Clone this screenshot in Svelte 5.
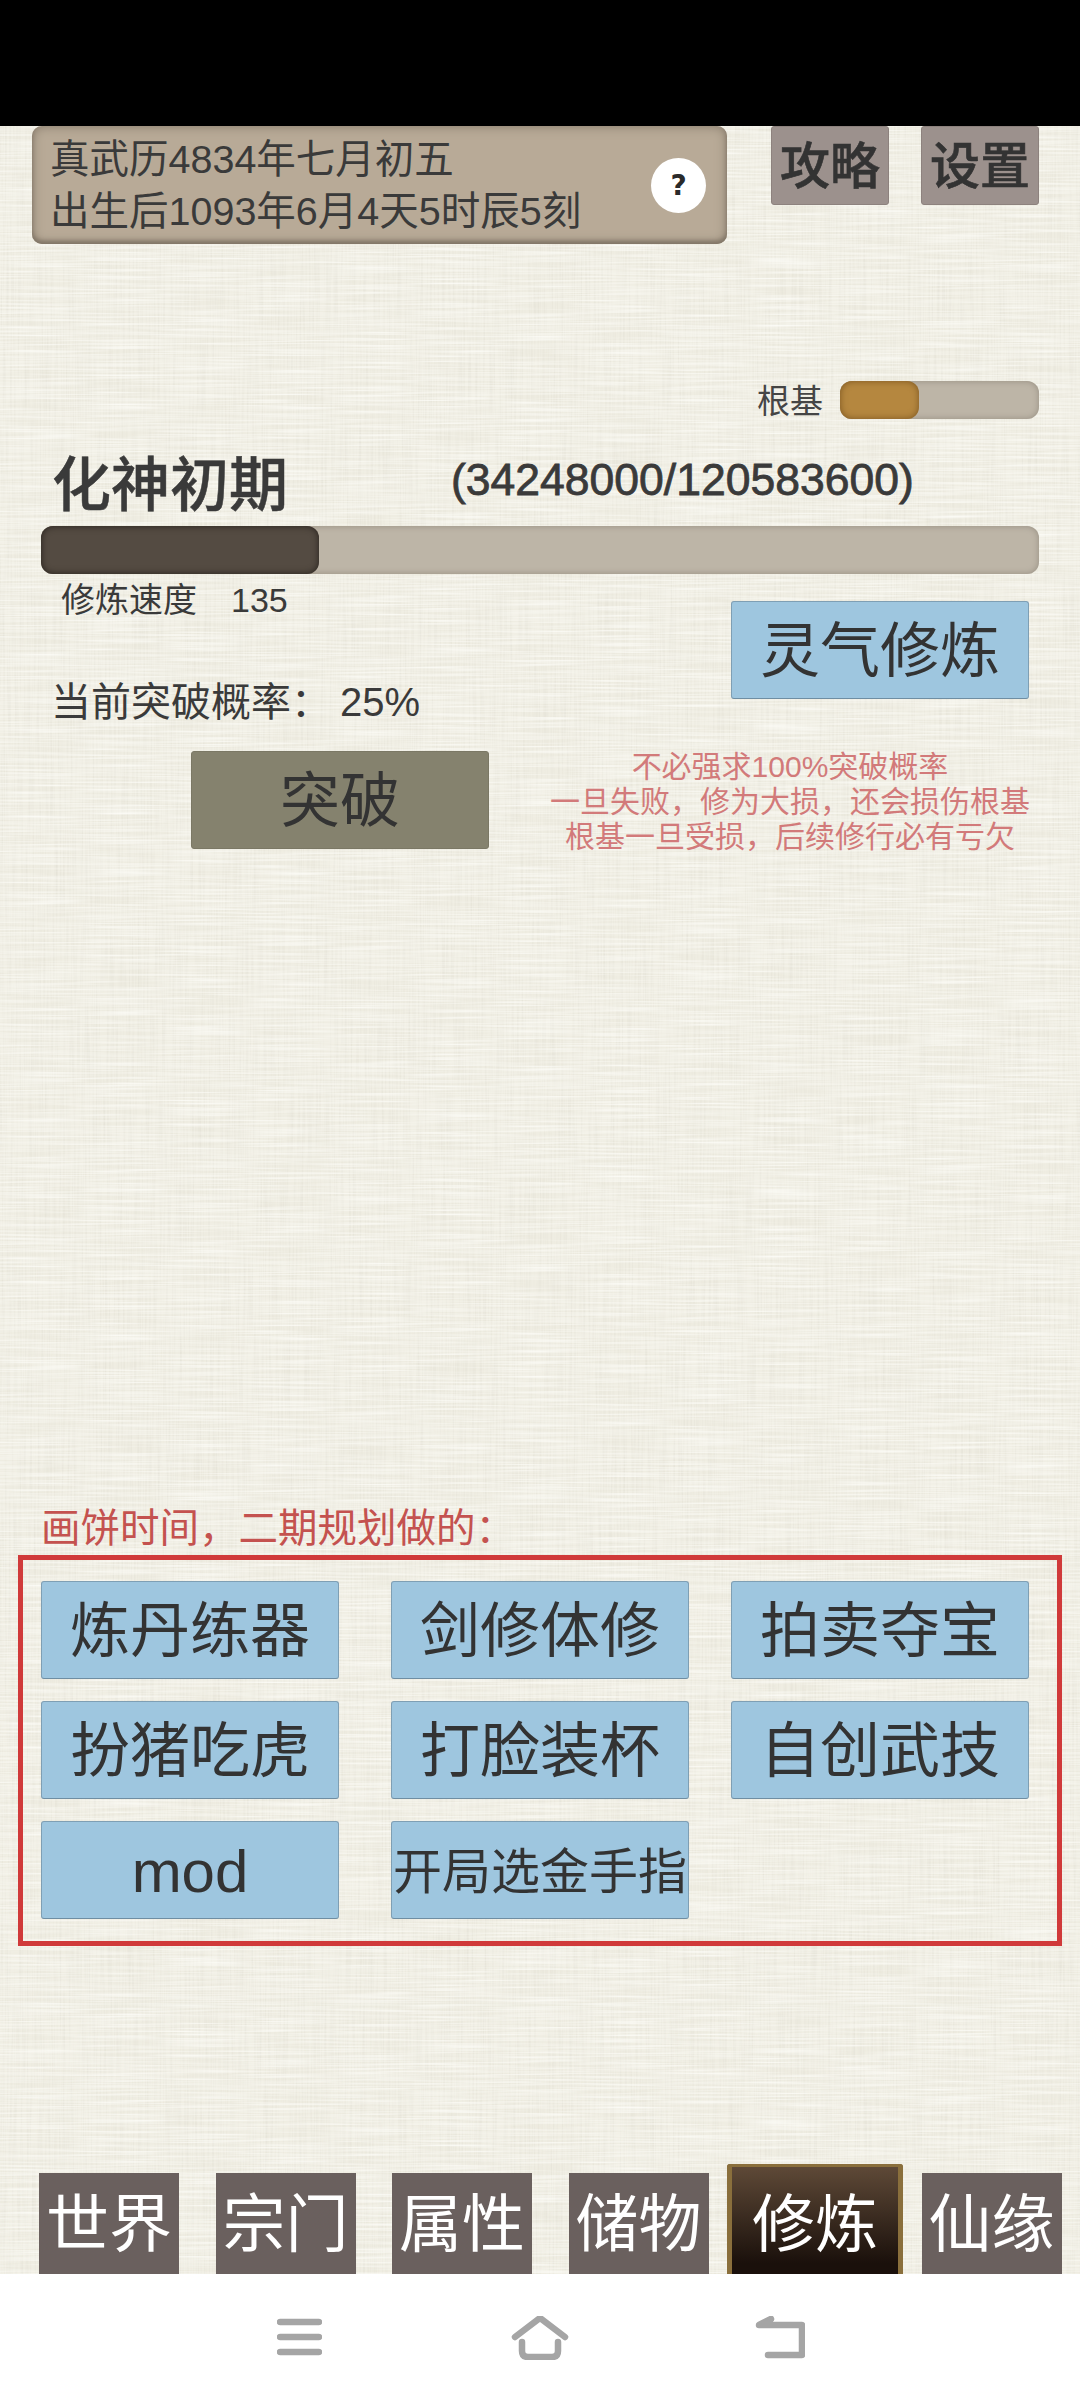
<script>
	const tabs = ['世界', '宗门', '属性', '储物', '修炼', '仙缘'];
	const activeTab = '修炼';
	const plans = ['炼丹练器', '剑修体修', '拍卖夺宝', '扮猪吃虎', '打脸装杯', '自创武技', 'mod', '开局选金手指'];
	const notes = ['不必强求100%突破概率', '一旦失败，修为大损，还会损伤根基', '根基一旦受损，后续修行必有亏欠'];
</script>

<div class="page">
	<!-- linen texture of the game background -->
	<svg class="linen" width="1080" height="2400" aria-hidden="true">
		<filter id="warp" x="0" y="0" width="100%" height="100%">
			<feTurbulence type="fractalNoise" baseFrequency="0.55 0.012" numOctaves="2" seed="4" />
			<feColorMatrix values="0 0 0 0 0.6  0 0 0 0 0.58  0 0 0 0 0.5  0.5 0 0 0 -0.2" />
		</filter>
		<filter id="weft" x="0" y="0" width="100%" height="100%">
			<feTurbulence type="fractalNoise" baseFrequency="0.012 0.55" numOctaves="2" seed="9" />
			<feColorMatrix values="0 0 0 0 1  0 0 0 0 1  0 0 0 0 0.97  1.4 0 0 0 -0.5" />
		</filter>
		<rect width="1080" height="2400" filter="url(#warp)" />
		<rect width="1080" height="2400" filter="url(#weft)" />
	</svg>

	<div class="status"></div>

	<main class="content">
		<header class="top">
			<div class="date">
				<div>真武历4834年七月初五</div>
				<div>出生后1093年6月4天5时辰5刻</div>
				<span class="help">?</span>
			</div>
			<button class="head-btn">攻略</button>
			<button class="head-btn">设置</button>
		</header>

		<div class="root">
			<span class="root-label">根基</span>
			<div class="root-bar"><div class="root-fill"></div></div>
		</div>

		<div class="realm">
			<span class="realm-name">化神初期</span>
			<span class="realm-count">(34248000/120583600)</span>
		</div>
		<div class="xp-bar"><div class="xp-fill"></div></div>

		<section class="train">
			<div class="train-left">
				<div class="speed"><span>修炼速度</span><span class="speed-val">135</span></div>
				<div class="chance"><span>当前突破概率：</span><span class="chance-val">25%</span></div>
				<button class="big-btn break">突破</button>
			</div>
			<div class="train-right">
				<button class="big-btn blue gather">灵气修炼</button>
				<div class="notes">
					{#each notes as line}
						<div>{line}</div>
					{/each}
				</div>
			</div>
		</section>

		<div class="plan-label">画饼时间，二期规划做的：</div>
		<section class="plan-box">
			{#each plans as plan}
				<button class="big-btn blue" class:tight={plan.length > 4}>{plan}</button>
			{/each}
		</section>

		<nav class="tabs">
			{#each tabs as tab}
				<button class="tab" class:active={tab === activeTab}>{tab}</button>
			{/each}
		</nav>
	</main>

	<footer class="sysnav">
		<svg width="45" height="40" viewBox="0 0 45 40">
			<path d="M3 6H42M3 21H42M3 36H42" />
		</svg>
		<svg class="home" width="58" height="44" viewBox="0 0 58 44">
			<path d="M4 21L29 2L54 21" />
			<path d="M11 26V35Q11 41 17 41H41Q47 41 47 35V26" />
		</svg>
		<svg class="back" width="50" height="44" viewBox="0 0 50 44">
			<path d="M13 39H47V9H4L16 3" />
		</svg>
	</footer>
</div>

<style>
	:global(body) {
		margin: 0;
	}

	.page {
		position: relative;
		width: 1080px;
		height: 2400px;
		display: flex;
		flex-direction: column;
		overflow: hidden;
		background: #efede2;
		color: #3a3a3a;
		font-family: "Liberation Sans", "Noto Sans CJK SC", sans-serif;
	}

	.linen {
		position: absolute;
		left: 0;
		top: 0;
	}

	button {
		padding: 0;
		font-family: inherit;
		color: inherit;
		cursor: pointer;
	}

	.status {
		position: relative;
		height: 126px;
		background: #000;
	}

	.content {
		position: relative;
		flex: 1;
		display: flex;
		flex-direction: column;
	}

	.top {
		display: flex;
		padding-left: 32px;
		height: 118px;
	}

	.date {
		position: relative;
		box-sizing: border-box;
		width: 695px;
		height: 118px;
		padding: 7px 0 0 18px;
		border-radius: 10px;
		background: #b8aa97;
		box-shadow: inset 0 0 12px #85796a, inset 0 -3px 4px #7d7263;
		font-size: 39.5px;
		line-height: 52px;
		white-space: nowrap;
	}

	.help {
		position: absolute;
		left: 619px;
		top: 32px;
		width: 55px;
		height: 55px;
		border-radius: 50%;
		background: #fff;
		color: #2a2a2a;
		font: bold 28px/55px "DejaVu Sans", sans-serif;
		text-align: center;
	}

	.head-btn {
		box-sizing: border-box;
		width: 118px;
		height: 79px;
		margin-left: 33px;
		padding-top: 3px;
		border: 1px solid #8d827e;
		border-radius: 3px;
		background: #9c918d;
		font-size: 50px;
		font-weight: 500;
		line-height: 70px;
		color: #333;
		-webkit-text-stroke: 0.6px #333;
	}

	.head-btn:first-of-type {
		margin-left: 44px;
	}

	.head-btn:last-of-type {
		margin-left: 32px;
	}

	.root {
		display: flex;
		align-items: center;
		justify-content: flex-end;
		gap: 17px;
		height: 38px;
		margin-top: 137px;
		padding-right: 41px;
	}

	.root-label {
		margin-top: -2px;
		font-size: 33px;
		color: #454545;
	}

	.root-bar {
		width: 199px;
		height: 38px;
		border-radius: 12px;
		background: #bdb5a7;
		box-shadow: inset 0 0 6px #958d80;
	}

	.root-fill {
		width: 79px;
		height: 38px;
		border-radius: 12px;
		background: #b5873f;
		box-shadow: inset 0 0 7px #7a5420;
	}

	.realm {
		display: flex;
		align-items: center;
		height: 64px;
		margin-top: 32px;
		padding-left: 52px;
	}

	.realm-name {
		width: 236px;
		margin-top: -6px;
		font-size: 59px;
		font-weight: 500;
		white-space: nowrap;
		-webkit-text-stroke: 0.5px #3a3a3a;
	}

	.realm-count {
		margin: -6px 0 0 163px;
		font-size: 44.5px;
		-webkit-text-stroke: 0.8px #3a3a3a;
	}

	.xp-bar {
		width: 998px;
		height: 48px;
		margin: 11px 0 0 41px;
		border-radius: 12px;
		background: #bdb5a7;
		box-shadow: inset 0 0 6px #958d80;
	}

	.xp-fill {
		width: 278px;
		height: 48px;
		border-radius: 12px;
		background: #544b42;
		box-shadow: inset 0 0 7px #26201b;
	}

	.train {
		display: flex;
	}

	.train-left {
		width: 500px;
		padding-top: 6px;
	}

	.speed {
		height: 40px;
		margin-left: 61px;
		font-size: 34px;
		line-height: 40px;
	}

	.speed-val {
		margin-left: 34px;
	}

	.chance {
		height: 40px;
		margin: 62px 0 0 51px;
		font-size: 40px;
		line-height: 40px;
		white-space: nowrap;
	}

	.chance-val {
		margin-left: 9px;
	}

	.big-btn {
		box-sizing: border-box;
		width: 298px;
		height: 98px;
		padding-top: 3px;
		border-radius: 3px;
		font-size: 60px;
		line-height: 86px;
		white-space: nowrap;
		color: #333;
	}

	.blue {
		border: 1px solid #7f9fb4;
		border-bottom-color: #6f8ea3;
		background: #9ec6df;
	}

	.tight {
		font-size: 49px;
	}

	.break {
		display: block;
		margin: 29px 0 0 191px;
		border: 1px solid #7b7865;
		background: #85826e;
	}

	.train-right {
		width: 580px;
		padding-top: 27px;
	}

	.gather {
		display: block;
		margin-left: 231px;
	}

	.notes {
		margin-top: 50px;
		font-size: 30px;
		line-height: 35px;
		text-align: center;
		color: #d27a7a;
	}

	.plan-label {
		height: 40px;
		margin: 654px 0 0 41px;
		font-size: 39.5px;
		line-height: 40px;
		color: #c4524f;
	}

	.plan-box {
		box-sizing: border-box;
		display: grid;
		grid-template-columns: 350px 340px 298px;
		grid-auto-rows: 98px;
		row-gap: 22px;
		width: 1044px;
		height: 391px;
		margin: 7px 0 0 18px;
		padding: 21px 0 0 18px;
		border: 5px solid #d03a3a;
	}

	.tabs {
		display: flex;
		align-items: flex-end;
		gap: 36.5px;
		margin-top: auto;
		padding-left: 39px;
	}

	.tab {
		flex: none;
		width: 140px;
		height: 101px;
		border: 0;
		background: #6a605e;
		font-size: 63px;
		line-height: 98px;
		color: #fff;
	}

	.tab.active {
		box-sizing: border-box;
		width: 176px;
		height: 110px;
		margin: 0 -18px;
		padding-top: 6px;
		border: 3px solid #8a6f3c;
		border-width: 3px 5px 0;
		border-radius: 3px 3px 0 0;
		background: linear-gradient(#5e4937, #1a100b 90%);
	}

	.sysnav {
		position: relative;
		box-sizing: border-box;
		display: flex;
		align-items: flex-start;
		height: 126px;
		padding: 42px 0 0 277px;
		background: #fff;
	}

	.sysnav svg {
		flex: none;
		fill: none;
		stroke: #a5a5a5;
		stroke-width: 6.5;
		stroke-linecap: round;
		stroke-linejoin: round;
	}

	.home {
		margin-left: 189px;
	}

	.back {
		margin-left: 186px;
	}
</style>
